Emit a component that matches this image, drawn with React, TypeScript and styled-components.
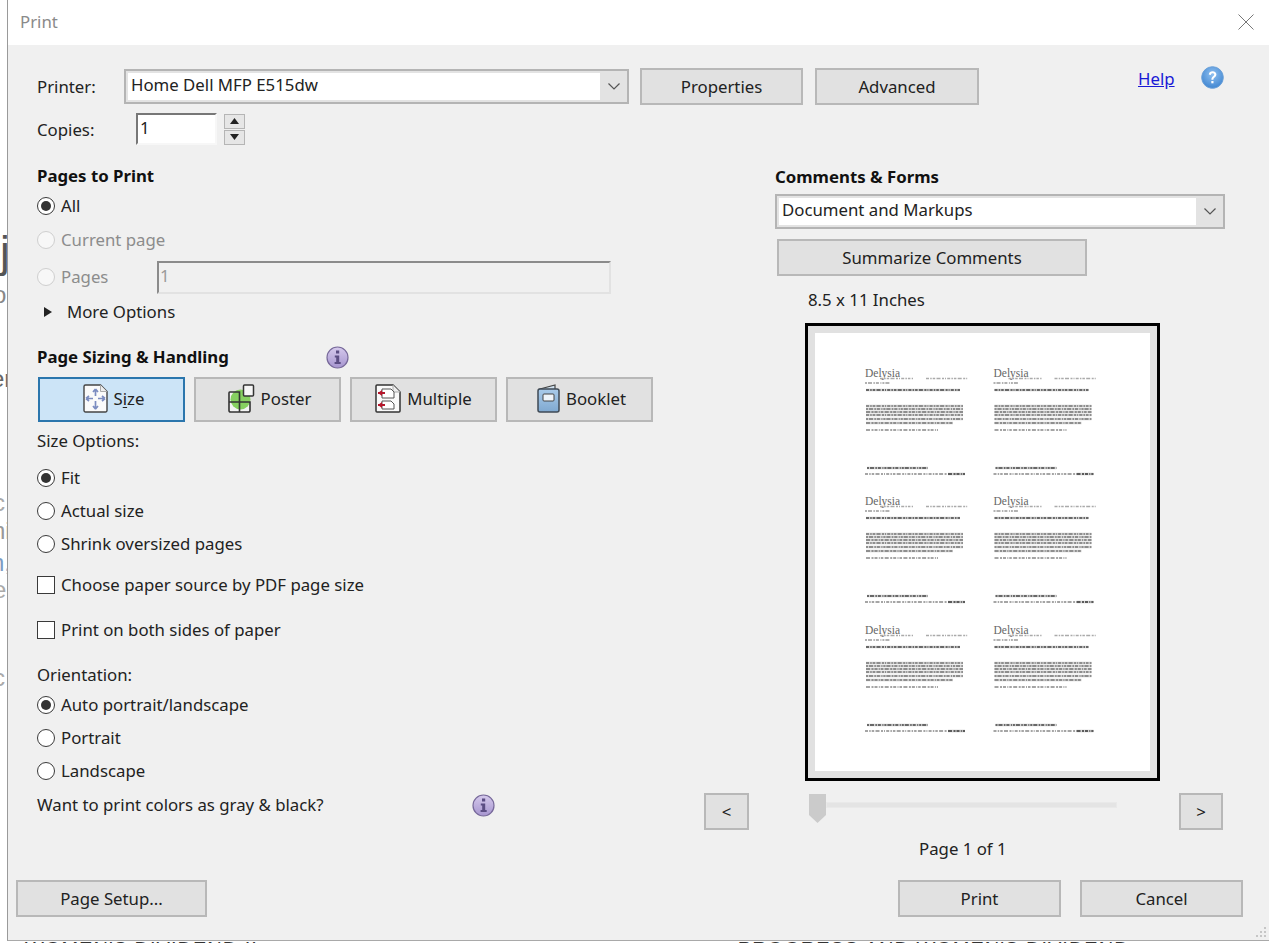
import React from "react";
import styled, { createGlobalStyle } from "styled-components";

const Global = createGlobalStyle`
  html, body { margin: 0; padding: 0; background: #fff; }
  body { font-family: "Noto Sans", "Open Sans", sans-serif; font-size: 16.8px; color: #222; }
`;

const Page = styled.div`
  width: 1269px; height: 943px; overflow: hidden; display: grid;
  grid-template-columns: 7px 1262px; grid-template-rows: 941px 2px; background: #fff;
`;
const Sliver = styled.div`
  display: flex; flex-direction: column; overflow: hidden; align-items: flex-start;
  font-family: "Liberation Sans", sans-serif; white-space: nowrap;
`;
const Frag = styled.span<{ $top: number; $left: number; $color: string; $size?: number }>`
  margin-top: ${p => p.$top}px; margin-left: ${p => p.$left}px; color: ${p => p.$color}; flex: none;
  font-size: ${p => p.$size ?? 24}px; line-height: ${p => p.$size ?? 24}px;
`;
const Dialog = styled.div`
  display: flex; flex-direction: column; background: #f0f0f0;
  border-left: 1px solid #9a9a9a; border-bottom: 1px solid #a9a9a9; position: relative;
`;
const TitleBar = styled.header`
  height: 45px; box-sizing: border-box; flex: none; background: #fff; display: flex; align-items: center;
  justify-content: space-between; padding: 0 15px 2px 12px; color: #8a8a8a;
`;
const Body = styled.div`
  flex: 1; display: flex; flex-direction: column; padding: 23px 26px 23px 8px;
`;
const TopRow = styled.div`
  display: flex; align-items: center; height: 37px; padding-left: 21px;
`;
const FieldLabel = styled.label<{ $w: number }>`
  width: ${p => p.$w}px; flex: none;
`;
const CopiesRow = styled.div`
  display: flex; align-items: center; height: 32px; margin-top: 8px; padding-left: 21px;
`;
const Select = styled.div<{ $w: number }>`
  width: ${p => p.$w}px; height: 35px; box-sizing: border-box; flex: none; display: flex;
  border: 2px solid #b4b4b4; background: #e3e3e3; padding: 2px 0 2px 2px;
`;
const SelectValue = styled.div`
  flex: 1; background: #fff; display: flex; align-items: center; padding: 0 0 2px 3px; line-height: 1;
`;
const Chevron = styled.div`
  width: 27px; flex: none; display: flex; align-items: center; justify-content: center;
`;
const Button = styled.button<{ $w: number; $active?: boolean }>`
  width: ${p => p.$w}px; height: 37px; flex: none;
  box-sizing: border-box; border: 2px solid ${p => (p.$active ? "#2b76ad" : "#b8b8b8")};
  background: ${p => (p.$active ? "#cce4f7" : "#e1e1e1")};
  font: inherit; color: #222; padding: 0; display: flex; align-items: center; justify-content: center; gap: 6px;
`;
const TileButton = styled(Button)<{ $pad?: number }>`
  height: 45px; padding: 0 0 2px ${p => p.$pad ?? 0}px;
`;
const ButtonGroup = styled.div`
  display: flex; gap: 12px; margin-left: 11px; align-self: flex-start;
`;
const HelpLink = styled.a`
  color: #1a1ad6; text-decoration: underline; margin-left: 159px; margin-top: -16px; width: 63px; flex: none;
`;
const HelpWrap = styled.div`
  display: flex; margin-top: -18px;
`;
const CopiesInput = styled.div`
  width: 81px; height: 32px; box-sizing: border-box; flex: none; background: #fff;
  border-style: solid; border-width: 2px; border-color: #777 #f7f7f7 #f7f7f7 #777;
  display: flex; align-items: center; padding-left: 2px; padding-bottom: 3px;
`;
const Spinner = styled.div`
  display: flex; flex-direction: column; gap: 1px; margin-left: 7px;
`;
const SpinBtn = styled.div`
  width: 21px; height: 15px; box-sizing: border-box; border: 1px solid #b5b5b5; background: #e6e6e6;
  display: flex; align-items: center; justify-content: center;
`;
const Columns = styled.div`
  display: grid; grid-template-columns: 667px 539px; padding-left: 21px; margin-top: 16px; flex: 1;
`;
const LeftCol = styled.section`
  display: flex; flex-direction: column;
`;
const RightCol = styled.section`
  display: flex; flex-direction: column;
`;
const Row = styled.div<{ $mt?: number }>`
  height: 30px; box-sizing: border-box; padding-bottom: 2px; flex: none; display: flex; align-items: center;
  margin-top: ${p => p.$mt ?? 0}px; white-space: nowrap;
`;
const Heading = styled.h3`
  margin: 2px 0 0; font-size: 16.8px; font-weight: 700; color: #111; line-height: 1;
`;
const Radio = styled.span<{ $on?: boolean; $off?: boolean }>`
  width: 18px; height: 18px; flex: none; box-sizing: border-box; border-radius: 50%; margin: 2px 6px 0 0;
  border: 1.5px solid ${p => (p.$off ? "#cfcfcf" : "#3a3a3a")}; background: ${p => (p.$off ? "#f7f7f7" : "#fff")};
  display: flex; align-items: center; justify-content: center;
  &::after { content: ""; width: 10px; height: 10px; border-radius: 50%; background: ${p => (p.$on ? "#333" : "transparent")}; }
`;
const Check = styled.span`
  width: 18px; height: 18px; flex: none; box-sizing: border-box; border: 1.5px solid #3a3a3a;
  background: #fff; margin: 2px 6px 0 0;
`;
const OptLabel = styled.span<{ $off?: boolean; $w?: number }>`
  color: ${p => (p.$off ? "#8c8c8c" : "#222")};
  ${p => (p.$w ? `width: ${p.$w}px;` : "")}
`;
const PagesInput = styled.div`
  width: 454px; height: 33px; box-sizing: border-box; flex: none; color: #9a9a9a; margin-top: 2px;
  border-style: solid; border-width: 2px; border-color: #8b8b8b #e2e2e2 #e2e2e2 #8b8b8b;
  display: flex; align-items: center; padding-left: 1px; padding-bottom: 3px;
`;
const Tri = styled.span`
  width: 0; height: 0; border-style: solid; border-width: 5px 0 5px 8px; margin: 2px 15px 0 7px;
  border-color: transparent transparent transparent #222;
`;
const TileRow = styled.div`
  display: flex; gap: 9px; margin-top: 5px; margin-left: 1px;
`;
const Mnemonic = styled.u`
  text-underline-offset: 2px;
`;
const InfoSlot = styled.span<{ $ml: number }>`
  margin: 2px 0 0 ${p => p.$ml}px; display: flex;
`;
const RightPad = styled.div`
  padding-left: 71px; display: flex; flex-direction: column;
`;
const RightHeading = styled.div`
  height: 30px; display: flex; align-items: center; margin-bottom: 3px;
`;
const SummarizeWrap = styled.div`
  margin: 10px 0 0 2px;
`;
const SizeLabel = styled.div`
  height: 24px; box-sizing: border-box; padding-bottom: 2px; margin: 12px 0 11px 33px; display: flex; align-items: center;
`;
const PreviewFrame = styled.div`
  width: 355px; height: 458px; box-sizing: border-box; border: 3px solid #000; background: #e1e1e1;
  padding: 7px; margin-left: 30px; display: flex;
`;
const Sheet = styled.svg`
  width: 335px; height: 438px; background: #fff; display: block;
`;
const Pager = styled.div`
  display: flex; align-items: flex-start; margin-top: 12px;
`;
const Slider = styled.div`
  width: 308px; margin: 1px 62px 0 60px; display: flex; align-items: flex-start; flex: none;
`;
const Track = styled.div`
  flex: 1; height: 6px; background: #e4e4e4; margin-top: 8px; border: 1px solid #e9e9e9; box-sizing: border-box;
`;
const PageCount = styled.div`
  margin: 4px 0 0 215px; height: 30px; box-sizing: border-box; padding-bottom: 2px; display: flex; align-items: center;
`;
const Footer = styled.footer`
  display: flex; gap: 19px; flex: none;
`;
const FooterSpacer = styled.div`
  flex: 1;
`;
const Grip = styled.svg`
  position: absolute; right: 2px; bottom: 2px;
`;
const BottomStrip = styled.div`
  grid-column: 1 / 3; height: 2px; overflow: hidden; display: flex; color: #333;
  font-family: "Liberation Sans", sans-serif; font-size: 20px; line-height: 20px; white-space: nowrap;
`;
const StripText = styled.span<{ $ml: number }>`
  margin-left: ${p => p.$ml}px; margin-top: -2px; flex: none; letter-spacing: 1px;
`;

const Down = () => (
  <svg width="14" height="9" viewBox="0 0 14 9"><path d="M1.5 1.5 7 7l5.5-5.5" fill="none" stroke="#555" strokeWidth="1.2" /></svg>
);
const Info = () => (
  <svg width="23" height="23" viewBox="0 0 23 23">
    <defs><linearGradient id="ig" x1="0" y1="0" x2="0" y2="1"><stop offset="0" stopColor="#d5c9ec" /><stop offset="1" stopColor="#a695cf" /></linearGradient></defs>
    <circle cx="11.5" cy="11.5" r="10.5" fill="url(#ig)" stroke="#77699a" strokeWidth="1.2" />
    <rect x="10" y="4.5" width="3.2" height="3" fill="#5b4d83" />
    <path d="M8.8 9.5h4.4v6.5h1.5v2H8.6v-2h1.6v-4.5H8.8z" fill="#5b4d83" />
  </svg>
);
const HelpIcon = () => (
  <svg width="23" height="23" viewBox="0 0 23 23">
    <defs><radialGradient id="hg" cx="0.5" cy="0.35" r="0.7"><stop offset="0" stopColor="#8fc0f0" /><stop offset="1" stopColor="#3b82cf" /></radialGradient></defs>
    <circle cx="11.5" cy="11.5" r="10.8" fill="url(#hg)" stroke="#6aa0d8" />
    <path d="M7.8 8.6c.3-2.2 1.8-3.3 3.8-3.3 2.2 0 3.8 1.3 3.8 3.2 0 2.6-3 2.7-3 5.2h-2c0-3.2 2.8-3.4 2.8-5.1 0-.8-.6-1.4-1.6-1.4s-1.6.6-1.8 1.7z" fill="#fff" />
    <rect x="10.3" y="15" width="2.2" height="2.3" fill="#fff" />
  </svg>
);
const SizeIcon = () => (
  <svg width="25" height="29" viewBox="0 0 25 29">
    <path d="M2.5 1h15L24 7.500V26.500a1.500 1.500 0 0 1-1.500 1.500h-20A1.500 1.500 0 0 1 1 26.500V2.500A1.500 1.500 0 0 1 2.500 1z" fill="#fafafa" stroke="#444" strokeWidth="1.400" />
    <path d="M17.500 1v6.500H24" fill="#eee" stroke="#aaa" />
    <path d="M10 14.500H3M3 14.500l3-2.500M3 14.500l3 2.500M15 14.500h7M22 14.500l-3-2.500M22 14.500l-3 2.500M12.500 12V5M12.500 5l-2.500 3M12.500 5l2.500 3M12.500 17v8M12.500 25l-2.500-3M12.500 25l2.500-3" fill="none" stroke="#7b8cc0" strokeWidth="1.700" />
  </svg>
);
const PosterIcon = () => (
  <svg width="27" height="29" viewBox="0 0 27 29">
    <rect x="1" y="8" width="21" height="20" rx="1" fill="#f4f4f4" />
    <circle cx="12.500" cy="15.500" r="10" fill="#86d060" />
    <path d="M1.800 8h9.700v20H2.500A1.500 1.500 0 0 1 1 26.500V9a1 1 0 0 1 .8-1zM1 18h21v8.500a1.500 1.500 0 0 1-1.500 1.500h-9" fill="none" stroke="#333" strokeWidth="1.600" />
    <rect x="15.500" y="1" width="10" height="11" rx="1" fill="#f6f6f6" stroke="#333" strokeWidth="1.500" />
  </svg>
);
const MultipleIcon = () => (
  <svg width="26" height="29" viewBox="0 0 26 29">
    <path d="M2 1h16l7 7v19a1 1 0 0 1-1 1H2a1 1 0 0 1-1-1V2a1 1 0 0 1 1-1z" fill="#fafafa" stroke="#333" strokeWidth="1.500" />
    <path d="M18 1v7h7" fill="#eee" stroke="#aaa" />
    <path d="M7 5h9l3 3v6H7zM7 17h9l3 3v5H7z" fill="#fff" stroke="#555" />
    <path d="M3 9h7M3 21h7" stroke="#b5172c" strokeWidth="2" />
    <path d="M3 9l4-3v6zM3 21l4-3v6z" fill="#b5172c" />
  </svg>
);
const BookletIcon = () => (
  <svg width="23" height="29" viewBox="0 0 23 29">
    <defs><linearGradient id="bk" x1="0" y1="0" x2="0" y2="1"><stop offset="0" stopColor="#a9cbea" /><stop offset="1" stopColor="#7fa8d0" /></linearGradient></defs>
    <path d="M1 5.500 18 1v4" fill="#cfe0ee" stroke="#444" strokeWidth="1.200" />
    <rect x="1" y="5" width="21" height="23" rx="2" fill="url(#bk)" stroke="#3f4a55" strokeWidth="1.500" />
    <rect x="6" y="10" width="11" height="7" rx="1" fill="#eef4fa" stroke="#444" />
  </svg>
);
const SpinArrow = ({ up }: { up?: boolean }) => (
  <svg width="9" height="6" viewBox="0 0 9 6"><path d={up ? "M4.500 0 9 6H0z" : "M0 0h9L4.500 6z"} fill="#222" /></svg>
);
const Thumb = () => (
  <svg width="17" height="29" viewBox="0 0 17 29"><path d="M0 0h17v21l-8.500 8L0 21z" fill="#cbcbcb" /></svg>
);

const DASHES = ["3 1.200 1.500 1 2.500 1.300 4 1.500 2 1 1 1.200", "2 1 4 1.400 1.500 1 3 1.500 1 1", "4 1.500 2 1 3 1.300 1 1 2.500 1.400"];
const Smudge = ({ d, tone, w, dash = 0 }: { d: string; tone: string; w: number; dash?: number }) => (
  <>
    <path d={d} stroke="#d4d4d4" strokeWidth={w + 1} />
    <path d={d} stroke={tone} strokeWidth={w} strokeDasharray={DASHES[dash]} />
  </>
);
const para = [29, 32, 35, 38, 42, 46];
const Ticket = ({ x, y }: { x: number; y: number }) => (
  <g transform={`translate(${x} ${y})`}>
    <text x="0" y="0" fontFamily="'Liberation Serif', serif" fontSize="11.500" fill="#666">Delysia</text>
    <g fill="none">
      <path d="M15 1.500H48M61 1.500H103" stroke="#aaa" strokeWidth="1.300" strokeDasharray={DASHES[0]} />
      <path d="M0 6H25" stroke="#999" strokeWidth="1.300" strokeDasharray={DASHES[1]} />
      <Smudge d="M1 13H95" tone="#444" w={1.6} />
      {para.map((py, i) => <Smudge key={py} d={`M1 ${py}H${i === 5 ? 88 : 98}`} tone="#777" w={1.4} dash={i % 3} />)}
      <path d="M1 53H73" stroke="#888" strokeWidth="1.400" strokeDasharray={DASHES[2]} />
      <Smudge d="M2 91H63" tone="#444" w={1.6} dash={1} />
      <path d="M0 97H82" stroke="#888" strokeWidth="1.400" strokeDasharray={DASHES[0]} />
      <Smudge d="M83 97H100" tone="#333" w={1.6} dash={2} />
    </g>
  </g>
);
const positions = [0, 128, 257].flatMap(r => [0, 128.5].map(c => ({ x: 50 + c, y: 44 + r })));

export default function App() {
  return (
    <Page>
      <Global />
      <Sliver aria-hidden>
        <Frag $top={230} $left={0} $color="#555" $size={44}>j</Frag>
        <Frag $top={9} $left={-7} $color="#888">o</Frag>
        <Frag $top={60} $left={-9} $color="#666">er</Frag>
        <Frag $top={100} $left={-7} $color="#aaa">c</Frag>
        <Frag $top={4} $left={-8} $color="#999">ni</Frag>
        <Frag $top={8} $left={-9} $color="#7d9cc4">n,</Frag>
        <Frag $top={3} $left={-7} $color="#aaa">e</Frag>
        <Frag $top={64} $left={-7} $color="#aaa">c</Frag>
      </Sliver>
      <Dialog>
        <TitleBar>
          Print
          <svg width="16" height="16" viewBox="0 0 16 16"><path d="M.5.5l15 15M15.500.5l-15 15" stroke="#777" strokeWidth="1" fill="none" /></svg>
        </TitleBar>
        <Body>
          <TopRow>
            <FieldLabel $w={87}>Printer:</FieldLabel>
            <Select $w={505}>
              <SelectValue>Home Dell MFP E515dw</SelectValue>
              <Chevron><Down /></Chevron>
            </Select>
            <ButtonGroup>
              <Button $w={163} type="button">Properties</Button>
              <Button $w={164} type="button">Advanced</Button>
            </ButtonGroup>
            <HelpLink href="#">Help</HelpLink>
            <HelpWrap><HelpIcon /></HelpWrap>
          </TopRow>
          <CopiesRow>
            <FieldLabel $w={99}>Copies:</FieldLabel>
            <CopiesInput>1</CopiesInput>
            <Spinner>
              <SpinBtn><SpinArrow up /></SpinBtn>
              <SpinBtn><SpinArrow /></SpinBtn>
            </Spinner>
          </CopiesRow>
          <Columns>
            <LeftCol>
              <Row><Heading>Pages to Print</Heading></Row>
              <Row><Radio $on /><OptLabel>All</OptLabel></Row>
              <Row $mt={4}><Radio $off /><OptLabel $off>Current page</OptLabel></Row>
              <Row $mt={7}><Radio $off /><OptLabel $off $w={96}>Pages</OptLabel><PagesInput>1</PagesInput></Row>
              <Row $mt={5}><Tri />More Options</Row>
              <Row $mt={15}><Heading>Page Sizing &amp; Handling</Heading><InfoSlot $ml={97}><Info /></InfoSlot></Row>
              <TileRow>
                <TileButton $w={147} $pad={4} $active type="button"><SizeIcon /><span>S<Mnemonic>i</Mnemonic>ze</span></TileButton>
                <TileButton $w={147} $pad={4} type="button"><PosterIcon />Poster</TileButton>
                <TileButton $w={147} type="button"><MultipleIcon />Multiple</TileButton>
                <TileButton $w={147} $pad={4} type="button"><BookletIcon />Booklet</TileButton>
              </TileRow>
              <Row $mt={4}>Size Options:</Row>
              <Row $mt={7}><Radio $on />Fit</Row>
              <Row $mt={3}><Radio />Actual size</Row>
              <Row $mt={3}><Radio />Shrink oversized pages</Row>
              <Row $mt={11}><Check />Choose paper source by PDF page size</Row>
              <Row $mt={15}><Check />Print on both sides of paper</Row>
              <Row $mt={15}>Orientation:</Row>
              <Row><Radio $on />Auto portrait/landscape</Row>
              <Row $mt={3}><Radio />Portrait</Row>
              <Row $mt={3}><Radio />Landscape</Row>
              <Row $mt={4}>Want to print colors as gray &amp; black?<InfoSlot $ml={148}><Info /></InfoSlot></Row>
            </LeftCol>
            <RightCol>
              <RightPad>
                <RightHeading><Heading>Comments &amp; Forms</Heading></RightHeading>
                <Select $w={450}>
                  <SelectValue>Document and Markups</SelectValue>
                  <Chevron><Down /></Chevron>
                </Select>
                <SummarizeWrap><Button $w={310} type="button">Summarize Comments</Button></SummarizeWrap>
                <SizeLabel>8.5 x 11 Inches</SizeLabel>
                <PreviewFrame>
                  <Sheet viewBox="0 0 335 438">
                    {positions.map(p => <Ticket key={`${p.x}-${p.y}`} x={p.x} y={p.y} />)}
                  </Sheet>
                </PreviewFrame>
              </RightPad>
              <Pager>
                <Button $w={45} type="button">&lt;</Button>
                <Slider><Thumb /><Track /></Slider>
                <Button $w={44} type="button">&gt;</Button>
              </Pager>
              <PageCount>Page 1 of 1</PageCount>
            </RightCol>
          </Columns>
          <Footer>
            <Button $w={191} type="button">Page Setup...</Button>
            <FooterSpacer />
            <Button $w={163} type="button">Print</Button>
            <Button $w={163} type="button">Cancel</Button>
          </Footer>
        </Body>
        <Grip width="11" height="11" viewBox="0 0 11 11"><path d="M8 0h2v2H8zM4 4h2v2H4zM8 4h2v2H8zM0 8h2v2H0zM4 8h2v2H4zM8 8h2v2H8z" fill="#c6c6c6" /></Grip>
      </Dialog>
      <BottomStrip aria-hidden>
        <StripText $ml={25}>WOMEN'S DIVIDEND II</StripText>
        <StripText $ml={480}>PROGRESS AND WOMEN'S DIVIDEND</StripText>
      </BottomStrip>
    </Page>
  );
}
